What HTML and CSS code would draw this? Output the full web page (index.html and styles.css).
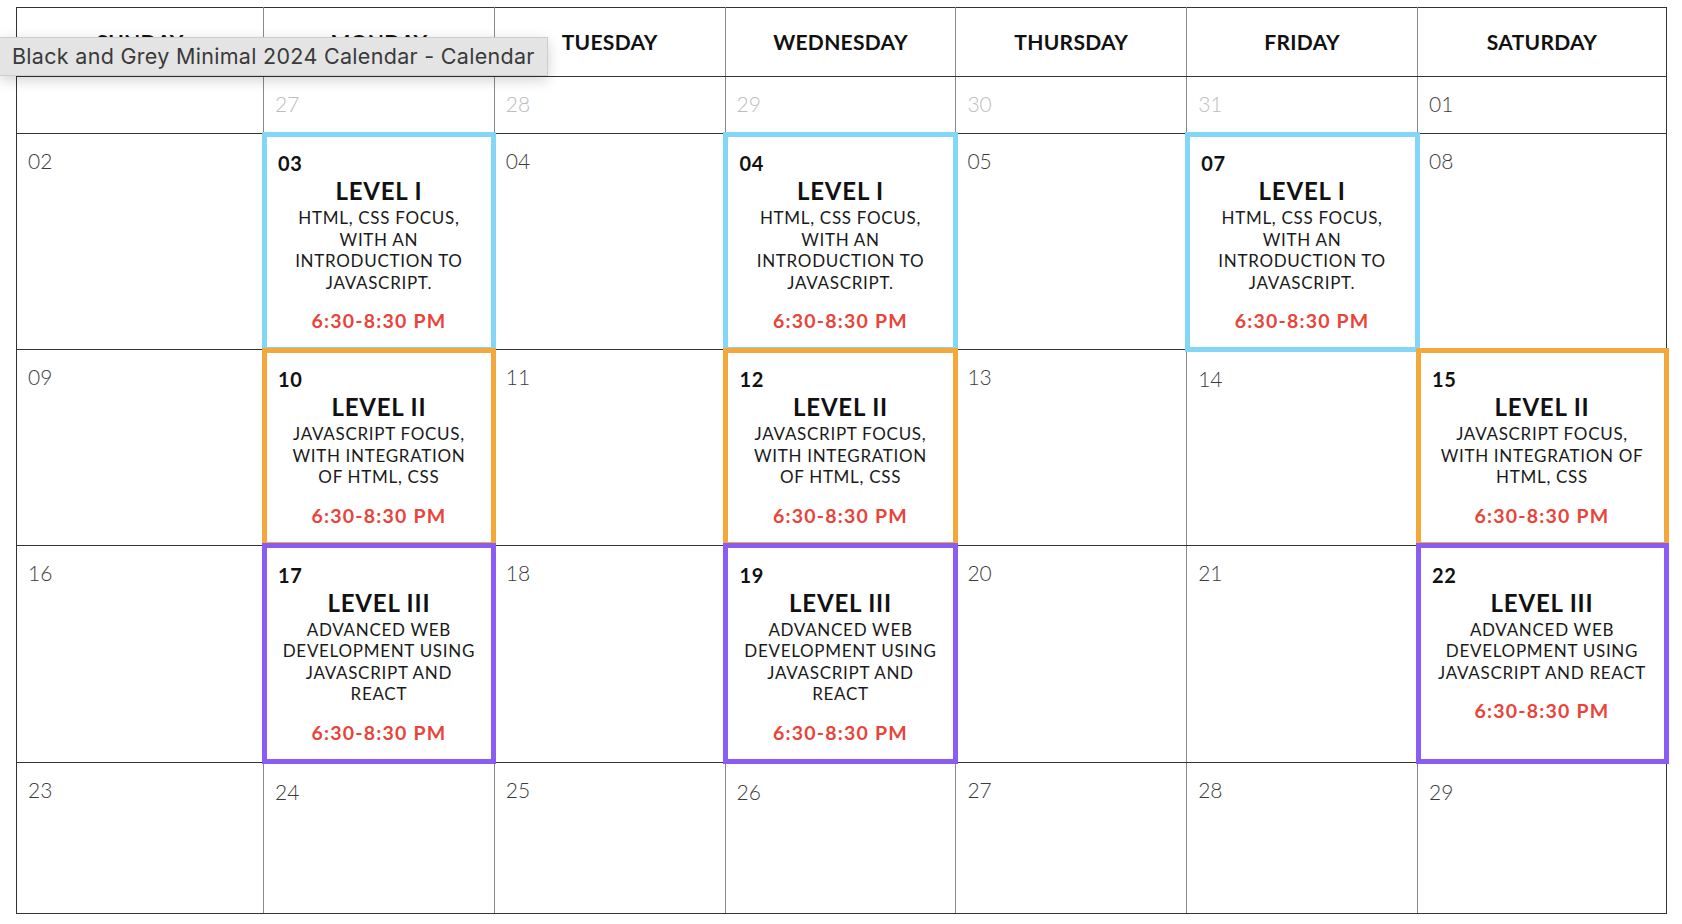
FILE: index.html
```html
<!DOCTYPE html>
<html lang="en">
<head>
  <meta charset="UTF-8">
  <meta name="viewport" content="width=device-width, initial-scale=1.0">
  <title>Black and Grey Minimal 2024 Calendar - Calendar</title>
  <link rel="stylesheet" href="styles.css">
</head>
<body>
  <!-- Tooltip of the browser tab -->
  <div class="tooltip">Black and Grey Minimal 2024 Calendar - Calendar</div>

  <table class="calendar">
    <colgroup>
      <col class="col-wide">
      <col><col><col><col><col>
      <col class="col-last">
    </colgroup>
    <thead>
      <tr>
        <th>SUNDAY</th>
        <th>MONDAY</th>
        <th>TUESDAY</th>
        <th>WEDNESDAY</th>
        <th>THURSDAY</th>
        <th>FRIDAY</th>
        <th>SATURDAY</th>
      </tr>
    </thead>
    <tbody>
      <!-- Dias do mês anterior -->
      <tr>
        <td></td>
        <td><span class="day prev">27</span></td>
        <td><span class="day prev">28</span></td>
        <td><span class="day prev">29</span></td>
        <td><span class="day prev">30</span></td>
        <td><span class="day prev">31</span></td>
        <td><span class="day">01</span></td>
      </tr>

      <!-- Semana 1: Level I -->
      <tr>
        <td><span class="day">02</span></td>
        <td class="event level-1">
          <div class="ev-num">03</div>
          <div class="ev-title">LEVEL I</div>
          <div class="ev-desc">HTML, CSS FOCUS,<br>WITH AN<br>INTRODUCTION TO<br>JAVASCRIPT.</div>
          <div class="ev-time">6:30-8:30 PM</div>
        </td>
        <td><span class="day">04</span></td>
        <td class="event level-1">
          <div class="ev-num">04</div>
          <div class="ev-title">LEVEL I</div>
          <div class="ev-desc">HTML, CSS FOCUS,<br>WITH AN<br>INTRODUCTION TO<br>JAVASCRIPT.</div>
          <div class="ev-time">6:30-8:30 PM</div>
        </td>
        <td><span class="day">05</span></td>
        <td class="event level-1">
          <div class="ev-num">07</div>
          <div class="ev-title">LEVEL I</div>
          <div class="ev-desc">HTML, CSS FOCUS,<br>WITH AN<br>INTRODUCTION TO<br>JAVASCRIPT.</div>
          <div class="ev-time">6:30-8:30 PM</div>
        </td>
        <td><span class="day">08</span></td>
      </tr>

      <!-- Semana 2: Level II -->
      <tr>
        <td><span class="day">09</span></td>
        <td class="event level-2">
          <div class="ev-num">10</div>
          <div class="ev-title">LEVEL II</div>
          <div class="ev-desc">JAVASCRIPT FOCUS,<br>WITH INTEGRATION<br>OF HTML, CSS</div>
          <div class="ev-time">6:30-8:30 PM</div>
        </td>
        <td><span class="day">11</span></td>
        <td class="event level-2">
          <div class="ev-num">12</div>
          <div class="ev-title">LEVEL II</div>
          <div class="ev-desc">JAVASCRIPT FOCUS,<br>WITH INTEGRATION<br>OF HTML, CSS</div>
          <div class="ev-time">6:30-8:30 PM</div>
        </td>
        <td><span class="day">13</span></td>
        <td><span class="day low">14</span></td>
        <td class="event level-2">
          <div class="ev-num">15</div>
          <div class="ev-title">LEVEL II</div>
          <div class="ev-desc">JAVASCRIPT FOCUS,<br>WITH INTEGRATION OF<br>HTML, CSS</div>
          <div class="ev-time">6:30-8:30 PM</div>
        </td>
      </tr>

      <!-- Semana 3: Level III -->
      <tr>
        <td><span class="day">16</span></td>
        <td class="event level-3">
          <div class="ev-num">17</div>
          <div class="ev-title">LEVEL III</div>
          <div class="ev-desc">ADVANCED WEB<br>DEVELOPMENT USING<br>JAVASCRIPT AND<br>REACT</div>
          <div class="ev-time">6:30-8:30 PM</div>
        </td>
        <td><span class="day">18</span></td>
        <td class="event level-3">
          <div class="ev-num">19</div>
          <div class="ev-title">LEVEL III</div>
          <div class="ev-desc">ADVANCED WEB<br>DEVELOPMENT USING<br>JAVASCRIPT AND<br>REACT</div>
          <div class="ev-time">6:30-8:30 PM</div>
        </td>
        <td><span class="day">20</span></td>
        <td><span class="day">21</span></td>
        <td class="event level-3">
          <div class="ev-num">22</div>
          <div class="ev-title">LEVEL III</div>
          <div class="ev-desc">ADVANCED WEB<br>DEVELOPMENT USING<br>JAVASCRIPT AND REACT</div>
          <div class="ev-time">6:30-8:30 PM</div>
        </td>
      </tr>

      <!-- Última semana -->
      <tr class="last-week">
        <td><span class="day">23</span></td>
        <td><span class="day low">24</span></td>
        <td><span class="day">25</span></td>
        <td><span class="day low">26</span></td>
        <td><span class="day">27</span></td>
        <td><span class="day">28</span></td>
        <td><span class="day low">29</span></td>
      </tr>
    </tbody>
  </table>
</body>
</html>
```

FILE: styles.css
```css
/* Layout geral */
body {
  margin: 0;
  padding: 7px 15px 0 16px;
  background-color: #fff;
  font-family: Lato, "Open Sans", sans-serif;
  color: #111;
}

/* Tabela do calendário */
.calendar {
  width: 1651px;
  table-layout: fixed;
  border-collapse: collapse;
}

.col-wide {
  width: 247px;
}

.col-last {
  width: 249px;
}

.calendar th,
.calendar td {
  border-top: 1px solid #333;
  border-bottom: 1px solid #333;
  border-left: 1px solid #8a8a8a;
  border-right: 1px solid #8a8a8a;
}

.calendar th:first-child,
.calendar td:first-child {
  border-left-color: #333;
}

.calendar th:last-child,
.calendar td:last-child {
  border-right-color: #333;
}

.calendar th {
  height: 66px;
  padding: 0 0 2px;
  font-size: 21px;
  font-weight: 700;
  letter-spacing: 0.3px;
  color: #111;
  text-align: center;
  vertical-align: middle;
}

.calendar td {
  padding: 14px 11px 17px;
  vertical-align: top;
}

.last-week td {
  height: 119px;
}

/* Número do dia */
.day {
  display: block;
  font-size: 21px;
  line-height: 25px;
  font-weight: 300;
  color: #3c3c3c;
}

.day.prev {
  color: #bdbdbd;
}

.day.low {
  padding-top: 2px;
}

/* Células com aula */
.event {
  text-align: center;
  outline: 5px solid transparent;
  outline-offset: -3px;
}

.calendar td.event {
  padding: 19px 14px 17px;
}

.calendar td.level-2,
.calendar td.level-3 {
  padding-bottom: 18px;
}

.level-1 {
  outline-color: #84d6f6 !important;
}

.level-2 {
  outline-color: #f4a83b !important;
}

.level-3 {
  outline-color: #8a5cf6 !important;
}

.ev-num {
  text-align: left;
  font-size: 20px;
  line-height: 20px;
  font-weight: 700;
  letter-spacing: 0.6px;
  color: #111;
}

.ev-title {
  margin-top: 5px;
  font-size: 24px;
  line-height: 26px;
  font-weight: 700;
  letter-spacing: 0.8px;
  color: #111;
}

.ev-desc {
  margin-top: 3px;
  font-size: 17px;
  line-height: 21.5px;
  font-weight: 400;
  letter-spacing: 0.7px;
  color: #1a1a1a;
  white-space: nowrap;
}

.ev-time {
  margin-top: 17px;
  font-size: 19.5px;
  line-height: 22px;
  font-weight: 700;
  letter-spacing: 1.2px;
  color: #e8443a;
}

/* Tooltip por cima do cabeçalho */
.tooltip {
  position: absolute;
  left: 0;
  top: 37px;
  width: 535px;
  height: 37px;
  padding-left: 12px;
  background-color: #e4e4e4;
  border: 1px solid #cdcdcd;
  border-left: none;
  box-shadow: 0 4px 14px rgba(0, 0, 0, 0.18);
  font-family: Inter, "Liberation Sans", sans-serif;
  font-size: 21.5px;
  letter-spacing: 0.3px;
  line-height: 37px;
  color: #3a3a3a;
  z-index: 2;
}
```
